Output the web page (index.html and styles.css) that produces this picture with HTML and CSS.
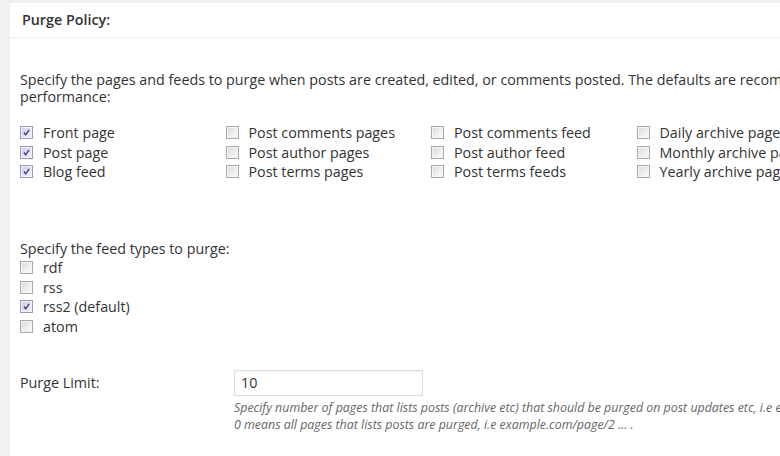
FILE: index.html
```html
<!DOCTYPE html>
<html lang="en">
<head>
<meta charset="utf-8">
<title>Purge Policy</title>
<link rel="stylesheet" href="styles.css">
</head>
<body>
<div class="panel">
  <h3 class="panel-title">Purge Policy:</h3>
  <div class="panel-body">
    <p class="intro">Specify the pages and feeds to purge when posts are created, edited, or comments posted. The defaults are recommended for best performance:</p>

    <div class="option-grid">
      <label class="opt"><span class="box checked"><svg viewBox="0 0 13 13"><path d="M3.5 6.5 L5.6 9.2 L9.6 3.4"/></svg></span>Front page</label>
      <label class="opt"><span class="box"></span>Post comments pages</label>
      <label class="opt"><span class="box"></span>Post comments feed</label>
      <label class="opt"><span class="box"></span>Daily archive pages</label>

      <label class="opt"><span class="box checked"><svg viewBox="0 0 13 13"><path d="M3.5 6.5 L5.6 9.2 L9.6 3.4"/></svg></span>Post page</label>
      <label class="opt"><span class="box"></span>Post author pages</label>
      <label class="opt"><span class="box"></span>Post author feed</label>
      <label class="opt"><span class="box"></span>Monthly archive pages</label>

      <label class="opt"><span class="box checked"><svg viewBox="0 0 13 13"><path d="M3.5 6.5 L5.6 9.2 L9.6 3.4"/></svg></span>Blog feed</label>
      <label class="opt"><span class="box"></span>Post terms pages</label>
      <label class="opt"><span class="box"></span>Post terms feeds</label>
      <label class="opt"><span class="box"></span>Yearly archive pages</label>
    </div>

    <p class="feed-heading">Specify the feed types to purge:</p>
    <div class="feed-list">
      <label class="opt"><span class="box"></span>rdf</label>
      <label class="opt"><span class="box"></span>rss</label>
      <label class="opt"><span class="box checked"><svg viewBox="0 0 13 13"><path d="M3.5 6.5 L5.6 9.2 L9.6 3.4"/></svg></span>rss2 (default)</label>
      <label class="opt"><span class="box"></span>atom</label>
    </div>

    <div class="field-row">
      <span class="field-label">Purge Limit:</span>
      <div class="field-control">
        <div class="text-input">10</div>
        <p class="description">Specify number of pages that lists posts (archive etc) that should be purged on post updates etc, i.e example.com/page/1, example.com/page/2 ... .<br>0 means all pages that lists posts are purged, i.e example.com/page/2 ... .</p>
      </div>
    </div>
  </div>
</div>
</body>
</html>
```

FILE: styles.css
```css
html, body {
  margin: 0;
  padding: 0;
}

body {
  background: #f1f1f1;
  font-family: "Open Sans", "Liberation Sans", sans-serif;
  font-size: 14.3px;
  color: #333;
  overflow: hidden;
  height: 456px;
}

.panel {
  margin: 3px 0 0 10px;
  width: 1000px;
  min-height: 460px;
  background: #fff;
}

.panel-title {
  margin: 0;
  padding: 8px 12px 8px 12px;
  font-size: 14.3px;
  line-height: 18px;
  font-weight: 600;
  color: #333;
  border-bottom: 1px solid #eee;
}

.panel-body {
  padding: 0 10px;
}

.intro {
  margin: 0;
  padding-top: 33px;
  width: 900px;
  line-height: 17px;
}

.option-grid {
  margin-top: 18px;
  display: grid;
  grid-template-columns: repeat(4, 205.5px);
}

.opt {
  display: flex;
  align-items: center;
  height: 19.5px;
  white-space: nowrap;
}

.box {
  flex: none;
  width: 11px;
  height: 11px;
  margin: 0 10px 0 0;
  border: 1px solid #a9a9a9;
  background: linear-gradient(135deg, #d8d8d8 0%, #f0f0f0 60%, #fbfbfb 100%);
  box-shadow: inset 0 0 0 1px #f4f4f4;
  display: flex;
}

.box.checked {
  background: linear-gradient(135deg, #c9c9e6 0%, #e4e4f4 60%, #f2f2fb 100%);
  border-color: #9a9ab6;
}

.box svg {
  width: 11px;
  height: 11px;
}

.box svg path {
  fill: none;
  stroke: #3e3e8e;
  stroke-width: 1.6;
}

.feed-heading {
  margin: 57px 0 0 0;
  line-height: 19.5px;
}

.field-row {
  display: flex;
  margin-top: 34px;
}

.field-label {
  width: 214px;
  flex: none;
  line-height: 26px;
}

.text-input {
  box-sizing: border-box;
  width: 189px;
  height: 26px;
  border: 1px solid #ddd;
  box-shadow: inset 0 1px 2px rgba(0, 0, 0, 0.05);
  padding: 0 6px;
  line-height: 24px;
  font-size: 14.3px;
  color: #333;
}

.description {
  margin: 3px 0 0 0;
  font-size: 12.4px;
  font-style: italic;
  line-height: 17px;
  color: #666;
  white-space: nowrap;
}
```
